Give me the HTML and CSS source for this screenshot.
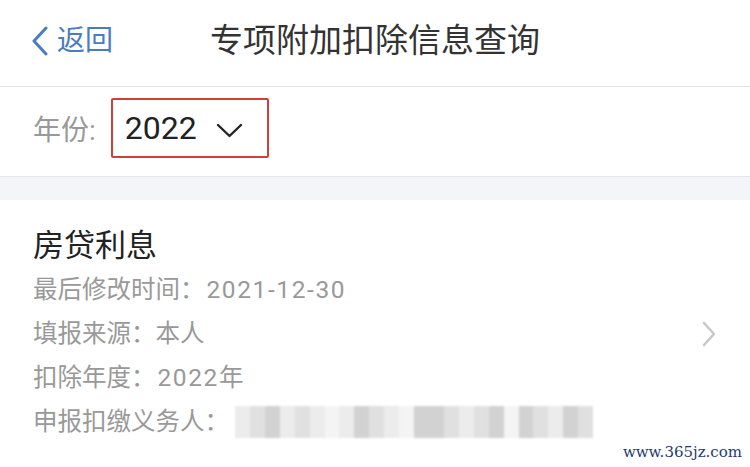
FILE: index.html
```html
<!DOCTYPE html>
<html lang="zh-CN">
<head>
    <meta charset="UTF-8">
    <meta name="viewport" content="width=device-width, initial-scale=1.0">
    <title>专项附加扣除信息查询</title>
    <link rel="stylesheet" href="styles.css">
</head>
<body>
    <!-- Top bar -->
    <header class="nav-bar">
        <a class="back-link" href="#">
            <svg class="back-icon" width="18" height="30" viewBox="0 0 18 30">
                <polyline points="15,2 3,15 15,28" fill="none" stroke="#4a7cc0" stroke-width="3" stroke-linecap="round" stroke-linejoin="round"/>
            </svg>
            <span>返回</span>
        </a>
        <h1 class="nav-title">专项附加扣除信息查询</h1>
    </header>

    <!-- Year filter -->
    <div class="year-row">
        <span class="year-label">年份:</span>
        <div class="year-select">
            <span class="year-value">2022</span>
            <svg class="down-icon" width="27" height="16" viewBox="0 0 27 16">
                <polyline points="2,3 13.5,14 25,3" fill="none" stroke="#222" stroke-width="2.4" stroke-linecap="round" stroke-linejoin="round"/>
            </svg>
        </div>
    </div>

    <div class="spacer"></div>

    <!-- Deduction record -->
    <div class="record">
        <div class="record-body">
            <h2 class="record-title">房贷利息</h2>
            <div class="record-line">最后修改时间：<span class="num">2021-12-30</span></div>
            <div class="record-line">填报来源：本人</div>
            <div class="record-line">扣除年度：<span class="num">2022</span>年</div>
            <div class="record-line">申报扣缴义务人：<span class="masked">
                <i class="px a"></i><i class="px b"></i><i class="px c"></i><i class="px a"></i><i class="px b"></i><i class="px a"></i><i class="px d"></i><i class="px a"></i><i class="px c"></i><i class="px b"></i><i class="px a"></i><i class="px d"></i><i class="px c"></i><i class="px c"></i><i class="px b"></i><i class="px a"></i><i class="px b"></i><i class="px c"></i><i class="px d"></i><i class="px c"></i><i class="px b"></i><i class="px a"></i><i class="px c"></i><i class="px b"></i>
            </span></div>
        </div>
        <svg class="more-icon" width="16" height="26" viewBox="0 0 16 26">
            <polyline points="3,2 13,13 3,24" fill="none" stroke="#c9c9c9" stroke-width="2.6" stroke-linecap="round" stroke-linejoin="round"/>
        </svg>
    </div>

    <div class="watermark">www.365jz.com</div>
</body>
</html>
```

FILE: styles.css
```css
/* General Reset */
* {
    margin: 0;
    padding: 0;
    box-sizing: border-box;
}

body {
    font-family: Roboto, 'Noto Sans CJK SC', sans-serif;
    background: #fff;
    color: #333;
    width: 750px;
    height: 467px;
    overflow: hidden;
    position: relative;
}

/* Top bar */
.nav-bar {
    height: 87px;
    border-bottom: 1px solid #e3e3e3;
    display: flex;
    align-items: center;
    justify-content: center;
    position: relative;
}

.back-link {
    position: absolute;
    left: 31px;
    top: 26px;
    display: flex;
    align-items: center;
    gap: 8px;
    color: #4a7cc0;
    text-decoration: none;
    font-size: 28px;
    line-height: 30px;
}

.nav-title {
    font-size: 33px;
    font-weight: normal;
    color: #333;
    line-height: 40px;
    margin-top: -4px;
}

/* Year filter */
.year-row {
    height: 90px;
    border-bottom: 1px solid #e6e6e6;
    display: flex;
    align-items: center;
    padding-left: 33px;
    padding-bottom: 8px;
}

.year-label {
    font-size: 28px;
    color: #999;
    margin-right: 15px;
}

.year-select {
    width: 158px;
    height: 60px;
    border: 2px solid #d23f3a;
    border-radius: 2px;
    display: flex;
    align-items: center;
    padding-left: 12px;
}

.year-value {
    font-size: 32px;
    color: #222;
    margin-right: 19px;
}

.down-icon {
    margin-top: 4px;
}

.spacer {
    height: 23px;
    background: #f4f5f9;
}

/* Deduction record */
.record {
    display: flex;
    align-items: center;
    justify-content: space-between;
    padding: 24px 33px 0 33px;
}

.record-title {
    font-size: 31px;
    font-weight: normal;
    color: #222;
    line-height: 44px;
}

.record-line {
    font-size: 24.5px;
    color: #999;
    line-height: 44px;
    display: flex;
    align-items: center;
}

.num {
    letter-spacing: 1.6px;
    margin-left: 2px;
}

.masked {
    display: flex;
    width: 358px;
    height: 32px;
    margin-left: 6px;
    filter: blur(1px);
}

.px {
    flex: 1;
    height: 100%;
}

.px.a { background: #ececec; }
.px.b { background: #e0e0e0; }
.px.c { background: #d2d2d2; }
.px.d { background: #f4f4f4; }

.more-icon {
    margin-top: 0;
}

.watermark {
    position: absolute;
    right: 8px;
    bottom: 6px;
    font-family: 'DejaVu Serif', serif;
    font-size: 15px;
    color: #1f3a70;
}
```
